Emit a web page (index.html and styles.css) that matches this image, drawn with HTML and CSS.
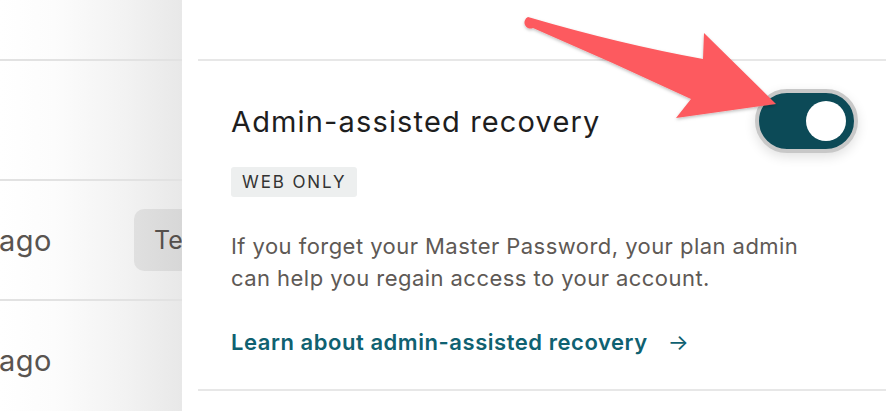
FILE: index.html
```html
<!DOCTYPE html>
<html lang="en">
<head>
<meta charset="utf-8">
<title>Admin-assisted recovery</title>
<link rel="stylesheet" href="styles.css">
</head>
<body>
<div class="page">
  <aside class="list">
    <div class="list-row list-row-top"></div>
    <div class="list-row"></div>
    <div class="list-row">
      <span class="when">ago</span>
      <span class="chip">Team</span>
    </div>
    <div class="list-row">
      <span class="when">ago</span>
    </div>
  </aside>
  <main class="panel">
    <section class="setting">
      <div class="setting-head">
        <h2 class="setting-title">Admin-assisted recovery</h2>
        <button class="toggle" type="button" aria-pressed="true"><span class="knob"></span></button>
      </div>
      <span class="badge">WEB ONLY</span>
      <p class="desc">If you forget your Master Password, your plan admin can help you regain access to your account.</p>
      <a class="learn" href="#">Learn about admin-assisted recovery <span class="learn-arrow">→</span></a>
    </section>
  </main>
  <svg class="callout" width="892" height="411" viewBox="0 0 892 411" aria-hidden="true">
    <defs>
      <filter id="sh" x="-10%" y="-10%" width="120%" height="130%">
        <feDropShadow dx="0" dy="1.5" stdDeviation="1.5" flood-color="#000" flood-opacity="0.25"/>
      </filter>
    </defs>
    <path filter="url(#sh)" fill="#fd5a5f" d="M528,17 Q620,44 703,59 L704,33 L776,104 L676,118 L691,99 Q612,62 533,28 A5.5,5.5 0 0 1 528,17 Z"/>
  </svg>
</div>
</body>
</html>
```
FILE: styles.css
```css
* { box-sizing: border-box; }
html, body { margin: 0; padding: 0; }
body {
  width: 892px;
  height: 411px;
  overflow: hidden;
  background: #ffffff;
  font-family: Inter, "Liberation Sans", sans-serif;
}
.page {
  position: relative;
  display: flex;
  width: 892px;
  height: 411px;
}
.list {
  width: 182px;
  flex: none;
  overflow: hidden;
  background: linear-gradient(to right, #ffffff 0%, #fcfcfc 30%, #f2f2f2 70%, #e8e8e8 100%);
}
.list-row {
  height: 120px;
  border-bottom: 2px solid #e2e2e2;
  display: flex;
  align-items: center;
  white-space: nowrap;
}
.list-row-top { height: 61px; }
.when {
  font-size: 29px;
  letter-spacing: 0.5px;
  color: #595450;
  margin-left: -1px;
}
.chip {
  margin-left: 82px;
  height: 62px;
  padding: 0 20px;
  display: flex;
  align-items: center;
  border-radius: 10px;
  background: rgba(0,0,0,0.07);
  font-size: 25px;
  color: #55504c;
}
.panel {
  flex: 1;
  padding: 0 6px 0 16px;
}
.setting {
  margin-top: 59px;
  border-top: 2px solid #e7e7e7;
  border-bottom: 2px solid #e7e7e7;
  padding: 28px 28px 31px 33px;
  display: flex;
  flex-direction: column;
  align-items: flex-start;
}
.setting-head {
  align-self: stretch;
  display: flex;
  align-items: center;
  justify-content: space-between;
}
.setting-title {
  margin: 0;
  font-size: 29px;
  font-weight: 400;
  color: #1e1e1e;
  letter-spacing: 1.15px;
}
.toggle {
  width: 103px;
  height: 64px;
  padding: 0 8px 0 0;
  border: 4px solid #c8c8c8;
  border-radius: 32px;
  background: #0c4a57;
  display: flex;
  align-items: center;
  justify-content: flex-end;
  box-shadow: 0 4px 12px rgba(0,0,0,0.12);
}
.knob {
  width: 40px;
  height: 40px;
  border-radius: 50%;
  background: #ffffff;
}
.badge {
  margin-top: 14px;
  height: 30px;
  padding: 0 11px;
  display: flex;
  align-items: center;
  border-radius: 3px;
  background: #edefef;
  font-size: 17px;
  font-weight: 400;
  letter-spacing: 1.9px;
  color: #333333;
}
.desc {
  margin: 33px 0 0;
  font-size: 22px;
  line-height: 32px;
  letter-spacing: 0.45px;
  color: #5e5955;
  max-width: 600px;
}
.learn {
  margin-top: 32px;
  font-size: 22px;
  line-height: 32px;
  font-weight: 600;
  letter-spacing: 0.55px;
  color: #0f6171;
  text-decoration: none;
}
.learn-arrow {
  font-weight: 400;
  margin-left: 14px;
}
.callout {
  position: absolute;
  left: 0;
  top: 0;
  pointer-events: none;
}
```
